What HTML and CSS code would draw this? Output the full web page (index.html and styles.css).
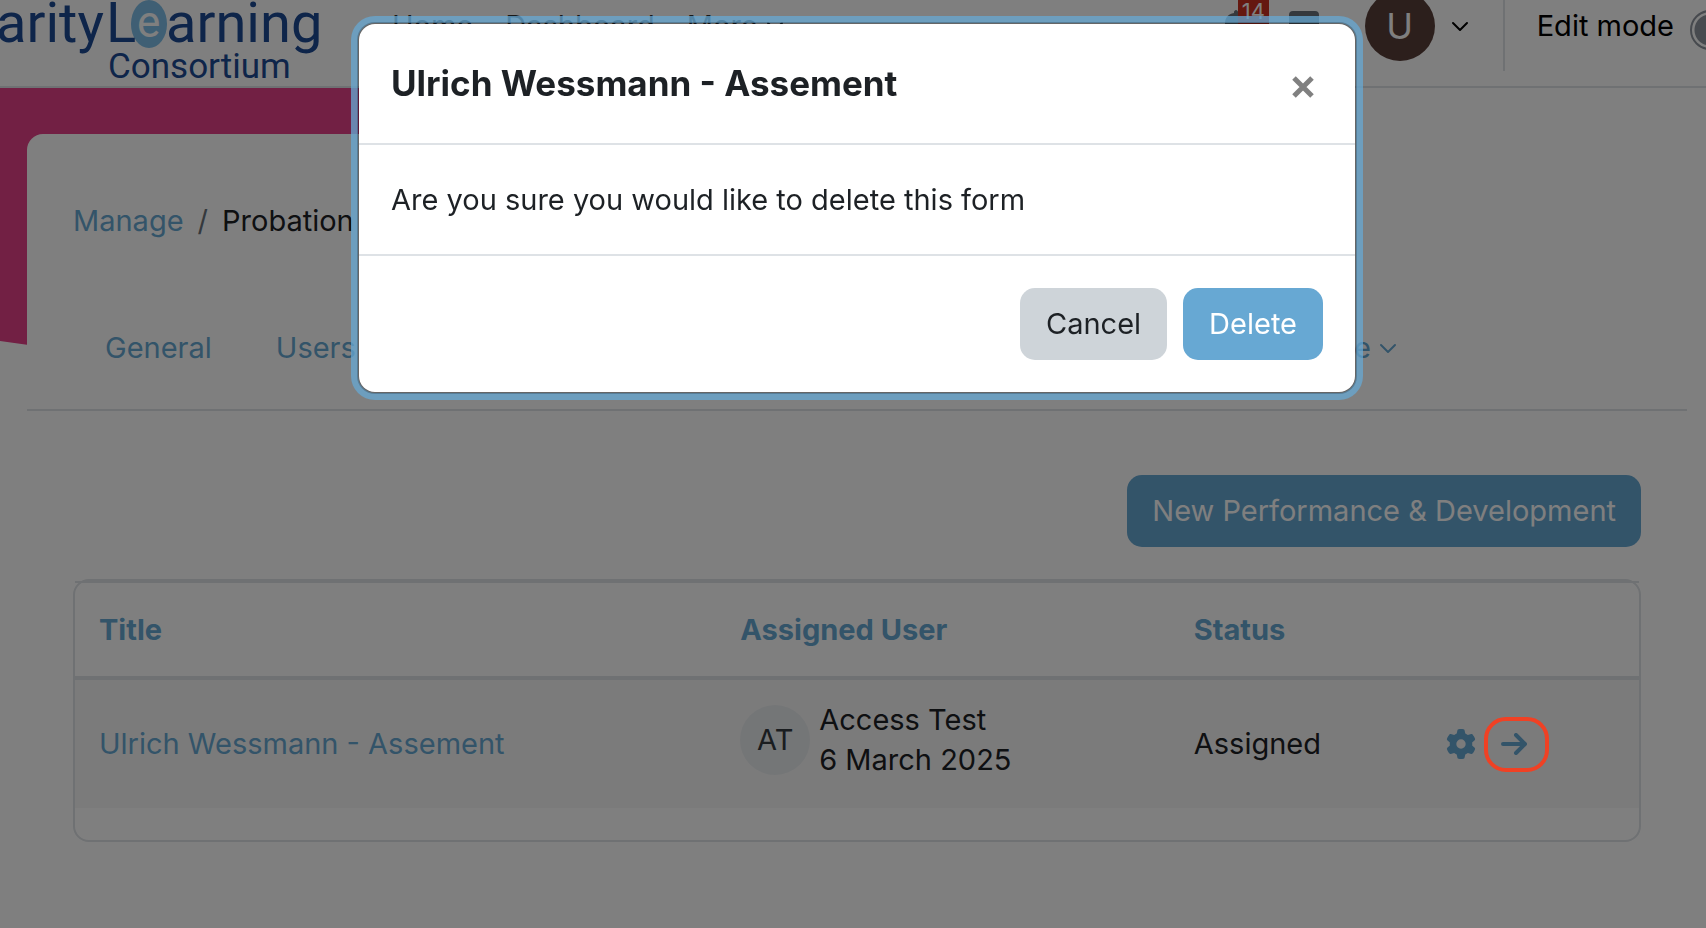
FILE: index.html
```html
<!DOCTYPE html>
<html lang="en">

<head>
    <meta charset="UTF-8">
    <meta name="viewport" content="width=device-width, initial-scale=1.0">
    <title>Performance &amp; Development</title>
    <link rel="stylesheet" href="styles.css">
</head>

<body>
    <header class="navbar">
        <a class="brand" href="#" aria-label="Charity Learning Consortium">
            <svg width="322" height="80" viewBox="0 0 322 80">
                <ellipse cx="149" cy="24" rx="18" ry="24" fill="#7ebfe8" />
                <text class="logo-word" x="-4" y="42">arity</text>
                <text class="logo-word" x="106" y="42">L</text>
                <text class="logo-word logo-e" x="137" y="37">e</text>
                <text class="logo-word" x="166" y="42">arning</text>
                <text class="logo-sub" x="108" y="78">Consortium</text>
            </svg>
        </a>
        <nav class="main-nav">
            <a href="#">Home</a>
            <a href="#">Dashboard</a>
            <a href="#">More
                <svg class="chevron" width="18" height="11" viewBox="0 0 18 11"><path d="M2 2l7 7 7-7" /></svg>
            </a>
        </nav>
        <div class="user-nav">
            <button class="icon-btn bell" aria-label="Notifications">
                <svg width="30" height="32" viewBox="0 0 30 32"><path d="M15 0c-1 0-2 1-2 2v1C7 4 4 8 4 13c0 6-2 9-4 11v3h30v-3c-2-2-4-5-4-11 0-5-3-9-9-10V2c0-1-1-2-2-2z" /></svg>
                <span class="count">14</span>
            </button>
            <button class="icon-btn" aria-label="Messages">
                <svg width="30" height="30" viewBox="0 0 30 30"><path d="M4 0h22a4 4 0 0 1 4 4v18a4 4 0 0 1-4 4H16l-7 4v-4H4a4 4 0 0 1-4-4V4a4 4 0 0 1 4-4z" /></svg>
            </button>
            <button class="user-menu" aria-label="User menu">
                <span class="avatar avatar-user">U</span>
                <svg class="chevron" width="18" height="11" viewBox="0 0 18 11"><path d="M2 2l7 7 7-7" /></svg>
            </button>
            <div class="edit-mode">
                <label for="editmode">Edit mode</label>
                <input type="checkbox" id="editmode" role="switch">
            </div>
        </div>
    </header>

    <div class="page">
        <div class="swoosh"></div>
        <main class="card">
            <nav class="breadcrumb" aria-label="Breadcrumb">
                <a href="#">Manage</a>
                <span class="slash">/</span>
                <span>Probation</span>
            </nav>

            <nav class="tabs">
                <a href="#">General</a>
                <a href="#">Users</a>
                <a class="tab-more" href="#">More
                    <svg class="chevron" width="18" height="11" viewBox="0 0 18 11"><path d="M2 2l7 7 7-7" /></svg>
                </a>
            </nav>

            <section class="content">
                <div class="actions">
                    <button class="btn btn-primary">New Performance &amp; Development</button>
                </div>

                <div class="table-box">
                    <table>
                        <thead>
                            <tr>
                                <th class="col-title"><a href="#">Title</a></th>
                                <th class="col-user"><a href="#">Assigned User</a></th>
                                <th class="col-status"><a href="#">Status</a></th>
                                <th></th>
                            </tr>
                        </thead>
                        <tbody>
                            <tr>
                                <td><a href="#">Ulrich Wessmann - Assement</a></td>
                                <td class="user-cell">
                                    <div class="user">
                                        <span class="avatar">AT</span>
                                        <span>Access Test<br>6 March 2025</span>
                                    </div>
                                </td>
                                <td>Assigned</td>
                                <td>
                                    <div class="row-icons">
                                        <a href="#" aria-label="Settings">
                                            <svg width="30" height="30" viewBox="0 0 512 512"><path d="M495.900 166.600c3.200 8.700.5 18.400-6.400 24.600l-43.300 39.400c1.100 8.300 1.700 16.800 1.700 25.400s-.6 17.100-1.700 25.400l43.300 39.400c6.900 6.200 9.600 15.900 6.400 24.600-4.400 11.900-9.700 23.300-15.800 34.300l-4.700 8.100c-6.600 11-14 21.400-22.100 31.200-5.900 7.200-15.700 9.600-24.500 6.800l-55.700-17.700c-13.400 10.300-28.200 18.900-44 25.400l-12.500 57.100c-2 9.100-9 16.300-18.200 17.800-13.800 2.300-28 3.500-42.500 3.500s-28.700-1.200-42.500-3.500c-9.200-1.500-16.200-8.700-18.200-17.800l-12.500-57.100c-15.800-6.500-30.600-15.100-44-25.400l-55.600 17.800c-8.800 2.800-18.600.3-24.500-6.800-8.100-9.800-15.500-20.200-22.100-31.200l-4.700-8.100c-6.100-11-11.400-22.400-15.800-34.300-3.200-8.700-.5-18.400 6.400-24.600l43.300-39.400C64.600 273.100 64 264.600 64 256s.6-17.100 1.700-25.400l-43.300-39.400c-6.900-6.200-9.600-15.900-6.400-24.600 4.400-11.900 9.700-23.300 15.800-34.300l4.700-8.100c6.600-11 14-21.400 22.100-31.200 5.900-7.200 15.700-9.600 24.500-6.800l55.700 17.700c13.400-10.300 28.200-18.900 44-25.400l12.500-57.100c2-9.100 9-16.300 18.200-17.800C227.300 1.200 241.500 0 256 0s28.700 1.200 42.500 3.500c9.200 1.500 16.200 8.700 18.200 17.800l12.500 57.100c15.800 6.500 30.600 15.100 44 25.400l55.700-17.700c8.800-2.800 18.600-.3 24.500 6.800 8.100 9.800 15.500 20.200 22.100 31.200l4.700 8.100c6.100 11 11.400 22.400 15.800 34.300zM256 336a80 80 0 1 0 0-160 80 80 0 1 0 0 160z" /></svg>
                                        </a>
                                        <a class="next" href="#" aria-label="Open">
                                            <svg class="arrow" width="26" height="22" viewBox="0 0 26 22"><path d="M2 11h21M15 2l9 9-9 9" /></svg>
                                            <span class="marker"></span>
                                        </a>
                                    </div>
                                </td>
                            </tr>
                        </tbody>
                    </table>
                </div>
            </section>
        </main>
    </div>

    <div class="backdrop"></div>
    <div class="modal">
        <div class="modal-content" role="dialog" aria-modal="true" aria-labelledby="modal-title">
            <div class="modal-header">
                <h5 id="modal-title">Ulrich Wessmann - Assement</h5>
                <button class="close" aria-label="Close">
                    <svg width="22" height="22" viewBox="0 0 22 22"><path d="M2 2l18 18M20 2L2 20" /></svg>
                </button>
            </div>
            <div class="modal-body">Are you sure you would like to delete this form</div>
            <div class="modal-footer">
                <button class="btn btn-secondary">Cancel</button>
                <button class="btn btn-primary">Delete</button>
            </div>
        </div>
    </div>
</body>

</html>
```
FILE: styles.css
```css
* {
    box-sizing: border-box;
}

body {
    margin: 0;
    background-color: #fff;
    color: #1d2125;
    font-family: Inter, "Liberation Sans", sans-serif;
    font-size: 29px;
    line-height: 40px;
    overflow: hidden;
}

a {
    color: #67a8d3;
    text-decoration: none;
}

button {
    font: inherit;
    border: none;
    background: none;
    padding: 0;
}

svg {
    display: block;
    flex: none;
}

.chevron, .arrow {
    fill: none;
    stroke: currentColor;
    stroke-width: 2;
    stroke-linecap: round;
    stroke-linejoin: round;
}

.arrow {
    stroke-width: 4;
}

/* Top bar */
.navbar {
    display: flex;
    align-items: center;
    height: 88px;
    padding-bottom: 34px;
    border-bottom: 2px solid #dee2e6;
    color: #000;
}

.brand {
    align-self: flex-start;
    width: 322px;
}

.logo-word, .logo-sub {
    font-family: Roboto, "Liberation Sans", sans-serif;
    font-size: 56px;
    fill: #1c4a94;
}

.logo-sub {
    font-size: 35px;
}

.logo-word.logo-e {
    font-size: 44px;
    fill: #fff;
}

.main-nav {
    display: flex;
    gap: 32px;
    margin-left: 70px;
}

.main-nav a {
    display: flex;
    align-items: center;
    gap: 8px;
    color: #333;
}

.user-nav {
    display: flex;
    align-items: center;
    flex: none;
    margin-left: auto;
    margin-right: -52px;
}

.icon-btn {
    position: relative;
    margin-right: 46px;
    fill: #6a737b;
}

.bell {
    margin-right: 38px;
}

.count {
    position: absolute;
    left: 17px;
    bottom: 16px;
    padding: 0 4px;
    background-color: #ca3120;
    color: #fff;
    font-size: 22px;
    line-height: 30px;
}

.user-menu {
    display: flex;
    align-items: center;
    gap: 16px;
    margin-right: 34px;
    color: inherit;
}

.avatar {
    display: flex;
    align-items: center;
    justify-content: center;
    flex: none;
    width: 70px;
    height: 70px;
    border-radius: 50%;
    background-color: #e9ecef;
    color: #343a40;
}

.avatar-user {
    background-color: #583e38;
    color: #fff;
    font-size: 36px;
}

.edit-mode {
    display: flex;
    align-items: center;
    gap: 16px;
    height: 90px;
    padding-left: 32px;
    border-left: 2px solid #dee2e6;
}

.edit-mode input {
    appearance: none;
    width: 68px;
    height: 40px;
    margin: 8px 0 0;
    border: 2px solid #8f959e;
    border-radius: 20px;
    background: radial-gradient(circle at 18px 18px, #8f959e 15px, #fff 16px);
}

/* Page */
.page {
    position: relative;
    padding: 46px 19px 0 27px;
}

.swoosh {
    position: absolute;
    top: 0;
    left: 0;
    width: 60%;
    height: 400px;
    background-color: #e44088;
    clip-path: polygon(0 0, 100% 0, 80% 80%, 30% 74%, 0 253px);
}

.card {
    position: relative;
    background-color: #fff;
    border-radius: 16px;
}

.breadcrumb {
    display: flex;
    gap: 14px;
    padding: 67px 46px 0;
}

.slash {
    color: #6a737b;
}

.tabs {
    display: flex;
    gap: 64px;
    padding: 87px 78px 41px;
    border-bottom: 2px solid #dee2e6;
}

.tabs a {
    display: flex;
    align-items: center;
    gap: 8px;
}

.tabs .tab-more {
    margin-left: auto;
    margin-right: 212px;
}

.content {
    padding: 64px 46px;
}

.actions {
    display: flex;
    justify-content: flex-end;
    margin-bottom: 32px;
}

.btn {
    height: 72px;
    padding: 0 25px;
    border-radius: 15px;
}

.btn-primary {
    background-color: #67a8d3;
    color: #fff;
}

.btn-secondary {
    background-color: #ced4d9;
    color: #1d2125;
}

.modal-footer .btn {
    padding: 0 26px;
}

.table-box {
    padding-bottom: 32px;
    border: 2px solid #dee2e6;
    border-radius: 16px;
}

table {
    width: 100%;
    border-spacing: 0;
    table-layout: fixed;
}

th, td {
    padding: 24px;
    text-align: left;
}

th {
    height: 99px;
    border-top: 2px solid #dee2e6;
    border-bottom: 4px solid #dee2e6;
    font-weight: 700;
}

td {
    background-color: #f7f7f7;
}

td.user-cell {
    padding: 20px 24px 28px;
}

.col-title {
    width: 41%;
}

.col-user {
    width: 29%;
}

.col-status {
    width: 16%;
}

.user {
    display: flex;
    align-items: center;
    gap: 9px;
}

.row-icons {
    display: flex;
    align-items: center;
    gap: 25px;
    padding-left: 2px;
    fill: #67a8d3;
}

.next {
    position: relative;
}

/* Highlight ring stays bright above the backdrop */
.marker {
    position: absolute;
    z-index: 20;
    top: -16px;
    left: -17px;
    width: 65px;
    height: 55px;
    border: 4px solid #f04124;
    border-radius: 22px;
}

/* Modal */
.backdrop {
    position: fixed;
    inset: 0;
    z-index: 10;
    background-color: rgba(0, 0, 0, 0.5);
}

.modal {
    position: fixed;
    inset: 0;
    z-index: 15;
    padding: 22px 0 0 8px;
    pointer-events: none;
}

.modal-content {
    max-width: 1000px;
    margin: 0 auto;
    background-color: #fff;
    background-clip: padding-box;
    border: 2px solid rgba(0, 0, 0, 0.2);
    border-radius: 18px;
    box-shadow: 0 0 0 6px rgba(103, 168, 211, 0.75);
    pointer-events: auto;
}

.modal-header {
    display: flex;
    align-items: center;
    justify-content: space-between;
    padding: 32px;
    border-bottom: 2px solid #dee2e6;
}

.modal-header h5 {
    margin: 0;
    font-size: 35px;
    line-height: 55px;
    font-weight: 700;
}

.close {
    padding: 6px 9px 0;
    fill: none;
    stroke: #808080;
    stroke-width: 5;
}

.modal-body {
    padding: 32px;
    line-height: 45px;
}

.modal-footer {
    display: flex;
    justify-content: flex-end;
    gap: 16px;
    padding: 32px;
    border-top: 2px solid #dee2e6;
}
```
